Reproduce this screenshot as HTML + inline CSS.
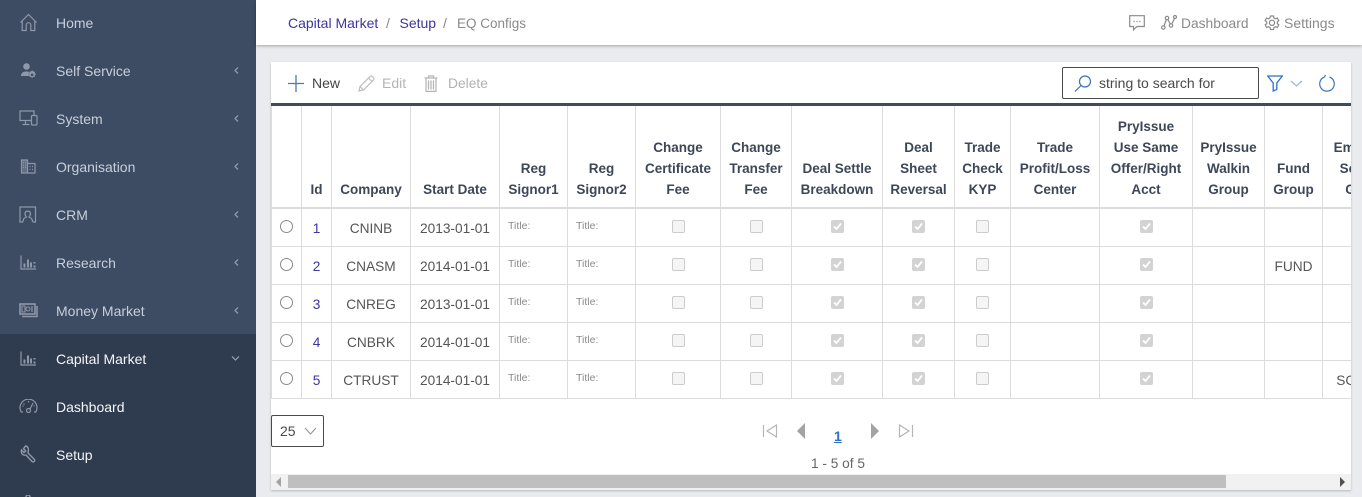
<!DOCTYPE html>
<html><head><meta charset="utf-8">
<style>
*{box-sizing:border-box}
html,body{margin:0;padding:0;width:1362px;height:497px;overflow:hidden;background:#e9ebee;font-family:"Liberation Sans",sans-serif}
.a{position:absolute}
#side{left:0;top:0;width:256px;height:497px;background:#3d4b63;overflow:hidden}
#act{left:0;top:334px;width:256px;height:163px;background:#2f3b4e}
.m{position:absolute;left:56px;font-size:14px;line-height:20px;color:#c8cfda;white-space:nowrap}
.w{color:#f4f6f8}
.ic{position:absolute;fill:none;stroke:#8e98a8;stroke-width:1.2}
.chev{position:absolute;left:233px;width:7px;height:9px;fill:none;stroke:#8e98a8;stroke-width:1.3}
#top{left:256px;top:0;width:1106px;height:45px;background:#fff;box-shadow:0 1px 3px rgba(0,0,0,.3)}
.t{position:absolute;font-size:14px;line-height:20px;white-space:nowrap}
#panel{left:271px;top:62px;width:1080px;height:428px;background:#fff;box-shadow:0 1px 2px rgba(0,0,0,.22);overflow:hidden}
#bar{left:0;top:41px;width:1080px;height:3px;background:#3d4b63}
table{position:absolute;left:0;top:44px;border-collapse:collapse;table-layout:fixed;width:1137px}
th,td{border:1px solid #dcdcdc;text-align:center;padding:0;overflow:hidden}
tr:first-child th{border-top:0}
th{height:102px;border-bottom:2px solid #dcdcdc;vertical-align:bottom;padding-bottom:7px;font-size:13.5px;line-height:21px;color:#3d4757;font-weight:bold}
td{height:38px;font-size:13.7px;color:#555;position:relative;line-height:20px;padding-top:4px;white-space:nowrap}
td.id{color:#3d35a0}
.r{display:block;width:13px;height:13px;border:1px solid #8a8a8a;border-radius:50%;margin:-5px auto 0 auto;position:relative;top:0}
.u,.c{display:block;width:13px;height:13px;border-radius:2px;margin:-6px auto 0 auto;position:relative}
.u{background:#f5f5f5;border:1px solid #ccc}
.c{background:#d3d3d3}
.c svg{position:absolute;left:2px;top:2px}
.ti{position:absolute;left:8px;top:10px;font-size:10.5px;line-height:14px;color:#8a8a8a}
</style></head>
<body>
<div id="side" class="a">
<div id="act" class="a"></div>

<svg class="ic" style="left:19px;top:13px" width="19" height="19" viewBox="0 0 19 19"><path d="M1.5 9.500 9.500 1.500l8 8M3.200 8.500V17.500h4V12a2.300 2.300 0 0 1 4.600 0v5.500h4V8.500"/></svg>
<div class="m" style="top:13px">Home</div>

<svg class="ic" style="left:20px;top:62px;stroke:none;fill:#8e98a8" width="18" height="17" viewBox="0 0 18 17"><circle cx="6.500" cy="4.500" r="3.300"/><path d="M1 14c0-3.500 2.500-4.500 5.500-4.500 1 0 2 .1 2.600.4-.6 1-.6 3 .2 4.100z"/><path transform="translate(-1,0)" d="M12.500 8.500l1.400.1.300 1.100 1-.5.900.9-.5 1 1.100.4v1.300l-1.100.4.500 1-.9.900-1-.5-.4 1.100h-1.300l-.4-1.100-1 .5-.9-.9.500-1-1.100-.4v-1.300l1.100-.4-.5-1 .9-.9 1 .5zM13.100 11.500a1.300 1.300 0 1 0 .01 0z" fill-rule="evenodd"/></svg>
<div class="m" style="top:61px">Self Service</div>
<svg class="chev" style="top:66px" viewBox="0 0 7 9"><path d="M5 1.500 2 4.500 5 7.500"/></svg>

<svg class="ic" style="left:19px;top:110px" width="19" height="16" viewBox="0 0 19 16"><path d="M12 10.500H1V1h14v4M6.500 10.500V14M3.500 14.500h7"/><rect x="12.500" y="5.500" width="5.500" height="9.500" rx="1"/></svg>
<div class="m" style="top:109px">System</div>
<svg class="chev" style="top:114px" viewBox="0 0 7 9"><path d="M5 1.500 2 4.500 5 7.500"/></svg>

<svg class="ic" style="left:20px;top:159px" width="16" height="15" viewBox="0 0 16 15"><path d="M1.500 14V1h6v13z" fill="#8e98a8" fill-opacity=".45"/><path d="M7.500 4.500H15V14H7.500M3 3.500h1M5 3.500h1M3 6h1M5 6h1M3 8.500h1M5 8.500h1M9.500 7.500h1M12 7.500h1M9.500 10.500h1M12 10.500h1"/></svg>
<div class="m" style="top:157px">Organisation</div>
<svg class="chev" style="top:162px" viewBox="0 0 7 9"><path d="M5 1.500 2 4.500 5 7.500"/></svg>

<svg class="ic" style="left:19px;top:206px" width="18" height="17" viewBox="0 0 18 17"><path d="M4 16H1V1h15.500v15H14"/><path d="M4 16c0-3 1-4 3.500-5-1.500-1.500-1.700-3-1.300-4.500C6.800 4.700 10.700 4.700 11.300 6.500c.4 1.500.2 3-1.300 4.500 2.500 1 3.500 2 3.500 5"/></svg>
<div class="m" style="top:205px">CRM</div>
<svg class="chev" style="top:210px" viewBox="0 0 7 9"><path d="M5 1.500 2 4.500 5 7.500"/></svg>

<svg class="ic" style="left:20px;top:255px" width="16" height="15" viewBox="0 0 16 15"><path d="M1 .5v13.500h15"/><path d="M4.500 12.500v-4M8 12.500v-8M11 12.500v-5M14.500 12.500v-2M14.500 8.500v-1.500" stroke-width="2"/></svg>
<div class="m" style="top:253px">Research</div>
<svg class="chev" style="top:258px" viewBox="0 0 7 9"><path d="M5 1.500 2 4.500 5 7.500"/></svg>

<svg class="ic" style="left:19px;top:303px" width="19" height="15" viewBox="0 0 19 15"><rect x="1" y="1" width="15" height="10" stroke-width="1.600"/><rect x="3" y="3" width="3" height="6" stroke-width="1"/><circle cx="9" cy="6" r="2" stroke-width="1"/><path d="M13 3v6" stroke-width="1.200"/><path d="M18 3v10.500H3" stroke-width="1.500"/></svg>
<div class="m" style="top:301px">Money Market</div>
<svg class="chev" style="top:306px" viewBox="0 0 7 9"><path d="M5 1.500 2 4.500 5 7.500"/></svg>

<svg class="ic" style="left:20px;top:351px" width="16" height="15" viewBox="0 0 16 15"><path d="M1 .5v13.500h15"/><path d="M4.500 12.500v-4M8 12.500v-8M11 12.500v-5M14.500 12.500v-2M14.500 8.500v-1.500" stroke-width="2"/></svg>
<div class="m w" style="top:349px">Capital Market</div>
<svg class="chev" style="left:231px;top:355px;width:9px;height:7px" viewBox="0 0 9 7"><path d="M1 1.500 4.500 5 8 1.500"/></svg>

<svg class="ic" style="left:19px;top:399px" width="19" height="14" viewBox="0 0 19 14"><path d="M4 13H2.200A8.500 8.500 0 1 1 16.800 13H15"/><path d="M11 10 14 4M4.500 4.500l1 1M9.500 2v1.500M15.500 7h-1M3.500 7h1"/><circle cx="9.500" cy="11.500" r="2"/></svg>
<div class="m w" style="top:397px">Dashboard</div>

<svg class="ic" style="left:20px;top:445px;stroke-width:1.400" width="17" height="18" viewBox="0 0 17 18"><path d="M5.500 1 3.500 3.800 5.800 6 4 7.500 1.500 5C.6 8 2.500 10.800 6 10l6 6.500c1.500 1.200 3.400-.6 2.300-2.200L8 8C9 4 8 1 5.500 1z"/></svg>
<div class="m w" style="top:445px">Setup</div>
<svg class="ic" style="left:22px;top:495px" width="12" height="2" viewBox="0 0 12 2"><path d="M4 2a2 2 0 0 1 4 0" stroke-width="1.500"/></svg>
</div>

<div id="top" class="a"></div>
<div class="t" style="left:288px;top:13px;color:#3d35a0">Capital Market</div>
<div class="t" style="left:386px;top:13px;color:#888">/</div>
<div class="t" style="left:399.500px;top:13px;color:#3d35a0">Setup</div>
<div class="t" style="left:443px;top:13px;color:#888">/</div>
<div class="t" style="left:457px;top:14px;color:#8a8a8a;font-size:13.500px">EQ Configs</div>

<svg class="a" style="left:1129px;top:15px;fill:none;stroke:#8a8a8a;stroke-width:1.200" width="16" height="16" viewBox="0 0 16 16"><path d="M.7.700H15.300V11.500H8L4.500 14.800V11.500H.7z"/><path d="M4.500 6.500h1.200M7.400 6.500h1.200M10.300 6.500h1.200" stroke-width="1.200"/></svg>
<svg class="a" style="left:1161px;top:15px;fill:none;stroke:#8a8a8a;stroke-width:1.200" width="16" height="15" viewBox="0 0 16 15"><circle cx="2.300" cy="12.500" r="1.700"/><circle cx="6" cy="3" r="1.700"/><circle cx="10" cy="10.500" r="1.700"/><circle cx="14" cy="2" r="1.500"/><path d="M3 11 5.400 4.600M6.800 4.500 9.300 9M10.800 9 13.500 3.400"/></svg>
<div class="t" style="left:1181px;top:14px;color:#8a8a8a;font-size:13.800px">Dashboard</div>
<svg class="a" style="left:1264px;top:15px;fill:none;stroke:#8a8a8a;stroke-width:1.200" width="16" height="16" viewBox="0 0 16 16"><path d="M6.500 1h3l.4 2 1.500.8 1.900-.8 1.500 2.600-1.500 1.300v1.700l1.500 1.300-1.500 2.600-1.900-.8-1.500.8-.4 2h-3l-.4-2-1.500-.8-1.900.8-1.500-2.600 1.500-1.300V6.900L1.100 5.600 2.600 3l1.900.8L6 3z"/><circle cx="8" cy="7.800" r="2.600"/></svg>
<div class="t" style="left:1284px;top:13px;color:#8a8a8a">Settings</div>

<div id="panel" class="a">
<div id="bar" class="a"></div>
<table>
<colgroup><col style="width:30px"><col style="width:30px"><col style="width:79px"><col style="width:89px"><col style="width:68px"><col style="width:68px"><col style="width:85px"><col style="width:71px"><col style="width:91px"><col style="width:72px"><col style="width:56px"><col style="width:89px"><col style="width:93px"><col style="width:72px"><col style="width:58px"><col style="width:86px"></colgroup>
<tr><th></th><th>Id</th><th>Company</th><th>Start Date</th><th>Reg<br>Signor1</th><th>Reg<br>Signor2</th><th>Change<br>Certificate<br>Fee</th><th>Change<br>Transfer<br>Fee</th><th>Deal Settle<br>Breakdown</th><th>Deal<br>Sheet<br>Reversal</th><th>Trade<br>Check<br>KYP</th><th>Trade<br>Profit/Loss<br>Center</th><th>PryIssue<br>Use Same<br>Offer/Right<br>Acct</th><th>PryIssue<br>Walkin<br>Group</th><th>Fund<br>Group</th><th>Employee<br>Scheme<br>Group</th></tr>
<tr><td><i class="r"></i></td><td class="id">1</td><td>CNINB</td><td>2013-01-01</td><td><span class="ti">Title:</span></td><td><span class="ti">Title:</span></td><td><i class="u"></i></td><td><i class="u"></i></td><td><i class="c"><svg width="9" height="9" viewBox="0 0 9 9"><path d="M1 4.500 3.500 7 8 1.500" fill="none" stroke="#fff" stroke-width="1.800"/></svg></i></td><td><i class="c"><svg width="9" height="9" viewBox="0 0 9 9"><path d="M1 4.500 3.500 7 8 1.500" fill="none" stroke="#fff" stroke-width="1.800"/></svg></i></td><td><i class="u"></i></td><td></td><td><i class="c"><svg width="9" height="9" viewBox="0 0 9 9"><path d="M1 4.500 3.500 7 8 1.500" fill="none" stroke="#fff" stroke-width="1.800"/></svg></i></td><td></td><td></td><td></td></tr>
<tr><td><i class="r"></i></td><td class="id">2</td><td>CNASM</td><td>2014-01-01</td><td><span class="ti">Title:</span></td><td><span class="ti">Title:</span></td><td><i class="u"></i></td><td><i class="u"></i></td><td><i class="c"><svg width="9" height="9" viewBox="0 0 9 9"><path d="M1 4.500 3.500 7 8 1.500" fill="none" stroke="#fff" stroke-width="1.800"/></svg></i></td><td><i class="c"><svg width="9" height="9" viewBox="0 0 9 9"><path d="M1 4.500 3.500 7 8 1.500" fill="none" stroke="#fff" stroke-width="1.800"/></svg></i></td><td><i class="u"></i></td><td></td><td><i class="c"><svg width="9" height="9" viewBox="0 0 9 9"><path d="M1 4.500 3.500 7 8 1.500" fill="none" stroke="#fff" stroke-width="1.800"/></svg></i></td><td></td><td>FUND</td><td></td></tr>
<tr><td><i class="r"></i></td><td class="id">3</td><td>CNREG</td><td>2013-01-01</td><td><span class="ti">Title:</span></td><td><span class="ti">Title:</span></td><td><i class="u"></i></td><td><i class="u"></i></td><td><i class="c"><svg width="9" height="9" viewBox="0 0 9 9"><path d="M1 4.500 3.500 7 8 1.500" fill="none" stroke="#fff" stroke-width="1.800"/></svg></i></td><td><i class="c"><svg width="9" height="9" viewBox="0 0 9 9"><path d="M1 4.500 3.500 7 8 1.500" fill="none" stroke="#fff" stroke-width="1.800"/></svg></i></td><td><i class="u"></i></td><td></td><td><i class="c"><svg width="9" height="9" viewBox="0 0 9 9"><path d="M1 4.500 3.500 7 8 1.500" fill="none" stroke="#fff" stroke-width="1.800"/></svg></i></td><td></td><td></td><td></td></tr>
<tr><td><i class="r"></i></td><td class="id">4</td><td>CNBRK</td><td>2014-01-01</td><td><span class="ti">Title:</span></td><td><span class="ti">Title:</span></td><td><i class="u"></i></td><td><i class="u"></i></td><td><i class="c"><svg width="9" height="9" viewBox="0 0 9 9"><path d="M1 4.500 3.500 7 8 1.500" fill="none" stroke="#fff" stroke-width="1.800"/></svg></i></td><td><i class="c"><svg width="9" height="9" viewBox="0 0 9 9"><path d="M1 4.500 3.500 7 8 1.500" fill="none" stroke="#fff" stroke-width="1.800"/></svg></i></td><td><i class="u"></i></td><td></td><td><i class="c"><svg width="9" height="9" viewBox="0 0 9 9"><path d="M1 4.500 3.500 7 8 1.500" fill="none" stroke="#fff" stroke-width="1.800"/></svg></i></td><td></td><td></td><td></td></tr>
<tr><td><i class="r"></i></td><td class="id">5</td><td>CTRUST</td><td>2014-01-01</td><td><span class="ti">Title:</span></td><td><span class="ti">Title:</span></td><td><i class="u"></i></td><td><i class="u"></i></td><td><i class="c"><svg width="9" height="9" viewBox="0 0 9 9"><path d="M1 4.500 3.500 7 8 1.500" fill="none" stroke="#fff" stroke-width="1.800"/></svg></i></td><td><i class="c"><svg width="9" height="9" viewBox="0 0 9 9"><path d="M1 4.500 3.500 7 8 1.500" fill="none" stroke="#fff" stroke-width="1.800"/></svg></i></td><td><i class="u"></i></td><td></td><td><i class="c"><svg width="9" height="9" viewBox="0 0 9 9"><path d="M1 4.500 3.500 7 8 1.500" fill="none" stroke="#fff" stroke-width="1.800"/></svg></i></td><td></td><td></td><td>SCHEME</td></tr>
</table>

<svg class="a" style="left:17px;top:13px;fill:none;stroke:#4a78b0;stroke-width:1.300" width="16" height="17" viewBox="0 0 16 17"><path d="M8 0V17M0 8.500H16"/></svg>
<div class="t" style="left:41px;top:11px;color:#444">New</div>
<svg class="a" style="left:87px;top:13px;fill:none;stroke:#bdbdbd;stroke-width:1.200" width="17" height="17" viewBox="0 0 17 17"><path d="M1 16 2 11.500 12 1.500a1.500 1.500 0 0 1 2.200 0l1.300 1.300a1.500 1.500 0 0 1 0 2.200L5.500 15zM2 11.500 5.500 15M10.500 3l3.500 3.500"/></svg>
<div class="t" style="left:111px;top:11px;color:#b5b5b5">Edit</div>
<svg class="a" style="left:153px;top:13px;fill:none;stroke:#b5b5b5;stroke-width:1.200" width="14" height="17" viewBox="0 0 14 17"><path d="M.5 3h13M4.500 3V1h5v2M2 3v13.400h10V3"/><path d="M4.500 5.500v9M7 5.500v9M9.500 5.500v9" stroke-width="1.300"/></svg>
<div class="t" style="left:177px;top:12px;color:#b0b0b0;font-size:13.800px">Delete</div>

<div class="a" style="left:791px;top:5px;width:197px;height:32px;border:1px solid #4a4a4a;border-radius:2px"></div>
<svg class="a" style="left:803px;top:13px;fill:none;stroke:#3f6fb0;stroke-width:1.200" width="18" height="17" viewBox="0 0 18 17"><circle cx="11" cy="6.500" r="5.500"/><path d="M7 10.500 1 16.500"/></svg>
<div class="t" style="left:828px;top:11px;color:#4a4a4a">string to search for</div>
<svg class="a" style="left:996px;top:13px;fill:none;stroke:#2f72c4;stroke-width:1.300" width="16" height="17" viewBox="0 0 16 17"><path d="M.7 1H15.300L9.800 8V14.500L6.200 16V8z"/></svg>
<svg class="a" style="left:1019px;top:18px;fill:none;stroke:#9db6d6;stroke-width:1.200" width="13" height="7" viewBox="0 0 13 7"><path d="M1 1 6.500 6 12 1"/></svg>
<svg class="a" style="left:1048px;top:12px;fill:none;stroke:#3f77bb;stroke-width:1.200" width="16" height="18" viewBox="0 0 16 18"><path d="M5.500 3A7.300 7.300 0 1 0 10.500 3M5.500 3 6.500 1"/></svg>

<div class="a" style="left:0;top:353px;width:53px;height:32px;border:1px solid #4a4a4a;border-radius:2px"></div>
<div class="t" style="left:9px;top:359px;color:#4a4a4a">25</div>
<svg class="a" style="left:33px;top:365px;fill:none;stroke:#999;stroke-width:1.200" width="13" height="8" viewBox="0 0 13 8"><path d="M1 1 6.500 7 12 1"/></svg>

<svg class="a" style="left:491px;top:362px;fill:none;stroke:#b5b5b5;stroke-width:1.200" width="16" height="14" viewBox="0 0 16 14"><path d="M1.500 1V13M14.500 1V13L5 7z"/></svg>
<svg class="a" style="left:525px;top:361px;fill:#a3a3a3" width="10" height="16" viewBox="0 0 10 16"><path d="M9 0V16L1 8z"/></svg>
<div class="t" style="left:563px;top:364px;color:#2f72c4;font-weight:bold;text-decoration:underline;font-size:14px">1</div>
<svg class="a" style="left:599px;top:361px;fill:#a3a3a3" width="10" height="16" viewBox="0 0 10 16"><path d="M1 0V16L9 8z"/></svg>
<svg class="a" style="left:627px;top:362px;fill:none;stroke:#b5b5b5;stroke-width:1.200" width="16" height="14" viewBox="0 0 16 14"><path d="M14.500 1V13M1.500 1V13L11 7z"/></svg>
<div class="t" style="left:520px;width:94px;text-align:center;top:392px;color:#666;font-size:13.700px">1 - 5 of 5</div>

<div class="a" style="left:0;top:412px;width:1080px;height:16px;background:#f1f1f1"></div>
<div class="a" style="left:17px;top:413px;width:938px;height:13px;background:#bfbfbf"></div>
<svg class="a" style="left:5px;top:415px;fill:#a3a3a3" width="6" height="10" viewBox="0 0 6 10"><path d="M5 0V10L0 5z"/></svg>
<svg class="a" style="left:1068px;top:415px;fill:#505050" width="6" height="10" viewBox="0 0 6 10"><path d="M1 0V10L6 5z"/></svg>
</div>
</body></html>
